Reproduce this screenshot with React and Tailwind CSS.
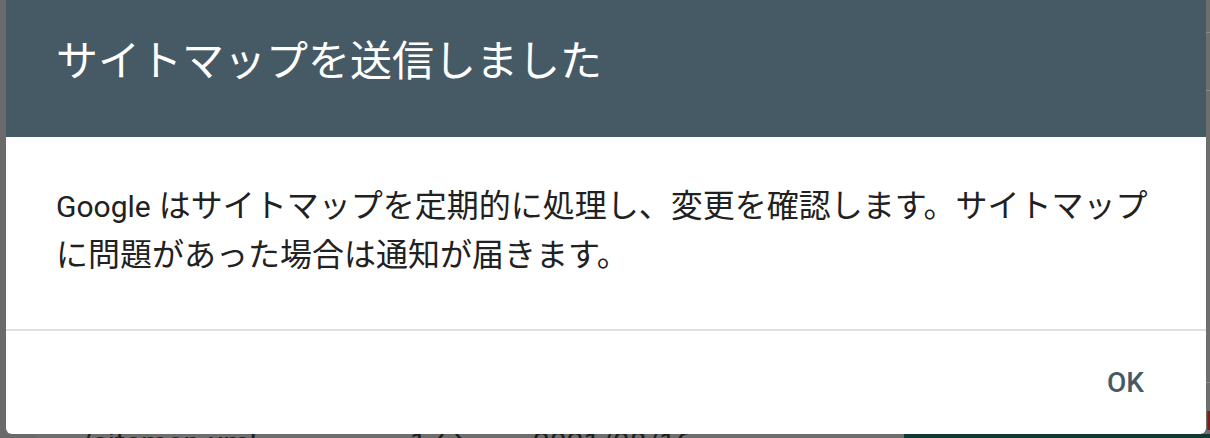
import React from 'react';

const font = { fontFamily: 'Roboto, "Noto Sans CJK JP", sans-serif' };

const App = () => {
  return (
    <div className="relative h-[438px] w-[1210px] overflow-hidden bg-[#6e6e6e]" style={font}>
      {/* page behind the scrim */}
      <div className="flex h-full">
        <div className="w-[36px] bg-[#6a6a6a]" />
        <div className="relative flex-1">
          <div className="absolute left-0 right-0 top-[32px] h-px bg-[#8a8a8a]" />
          <div className="absolute left-0 right-0 top-[90px] h-px bg-[#8a8a8a]" />
          <div className="absolute left-0 right-0 top-[382px] h-px bg-[#8a8a8a]" />
          <div className="flex items-start pt-[428px] text-[30px] leading-[30px] text-[#1e1e1e]">
            <span className="ml-[44px] w-[330px]">/sitemap.xml</span>
            <span className="w-[123px]">1 分</span>
            <span className="w-[371px]">2021/08/16</span>
            <span className="mt-[6px] h-[20px] flex-1 bg-[#0c3b36]" />
          </div>
          <span className="absolute right-[-14px] top-[402px] text-[26px] font-medium text-[#7a1f17]">H</span>
        </div>
      </div>

      {/* dialog */}
      <div className="absolute left-[6px] top-0 flex w-[1200px] flex-col overflow-hidden rounded-b-[6px] bg-white">
        <div className="h-[137px] bg-[#465a65] pl-[50px] pt-[34px]">
          <h2 className="text-[42px] leading-[56px] font-normal text-white">サイトマップを送信しました</h2>
        </div>
        <div className="h-[192px] pl-[50px] pr-[20px] pt-[45px]">
          <p className="whitespace-nowrap text-[32px] leading-[48px] text-[#212121]">
            <span className="text-[30px]">Google</span> はサイトマップを定期的に処理し、変更を確認します。サイトマップ
            <br />
            に問題があった場合は通知が届きます。
          </p>
        </div>
        <div className="h-[2px] bg-[#e0e0e0]" />
        <div className="flex h-[103px] items-center justify-end pr-[46px]">
          <button className="px-[16px] text-[28px] font-medium leading-[40px] text-[#455a64]">OK</button>
        </div>
      </div>
    </div>
  );
};

export default App;
